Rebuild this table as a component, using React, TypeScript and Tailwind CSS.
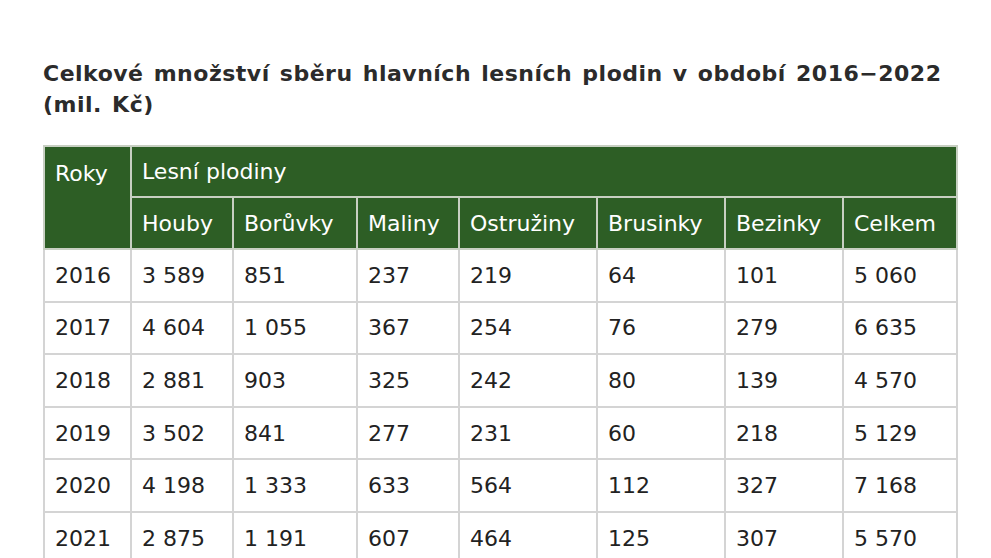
const rows: string[][] = [
  ['2016', '3 589', '851', '237', '219', '64', '101', '5 060'],
  ['2017', '4 604', '1 055', '367', '254', '76', '279', '6 635'],
  ['2018', '2 881', '903', '325', '242', '80', '139', '4 570'],
  ['2019', '3 502', '841', '277', '231', '60', '218', '5 129'],
  ['2020', '4 198', '1 333', '633', '564', '112', '327', '7 168'],
  ['2021', '2 875', '1 191', '607', '464', '125', '307', '5 570'],
  ['2022', '3 120', '1 010', '412', '301', '88', '240', '5 171'],
];

const widths = [87, 102, 124, 102, 138, 128, 118, 114];
const fruits = ['Houby', 'Borůvky', 'Maliny', 'Ostružiny', 'Brusinky', 'Bezinky', 'Celkem'];

export default function App() {
  return (
    <div className="min-h-screen bg-white pl-[43px] pt-[58px] font-['DejaVu_Sans',Verdana,sans-serif] text-[#222]">
      <h2 className="w-[912px] text-[22px] font-bold leading-[31px] tracking-[0.5px] [word-spacing:2px] text-[#2b2b2b]">
        Celkové množství sběru hlavních lesních plodin v období 2016−2022 (mil. Kč)
      </h2>
      <table className="mt-[25px] w-[914px] table-fixed border-collapse border-2 border-[#d4d4d4] text-[22px]">
        <colgroup>
          {widths.map((w, i) => (
            <col key={i} style={{ width: w }} />
          ))}
        </colgroup>
        <thead className="bg-[#2d5e25] text-white">
          <tr className="h-[51px]">
            <th rowSpan={2} className="border-2 border-[#c7cfc2] px-[10px] pt-[10px] text-left align-top font-normal">
              Roky
            </th>
            <th colSpan={7} className="border-2 border-[#c7cfc2] px-[10px] text-left font-normal">
              Lesní plodiny
            </th>
          </tr>
          <tr className="h-[52px]">
            {fruits.map((f) => (
              <th key={f} className="border-2 border-[#c7cfc2] px-[10px] text-left font-normal">
                {f}
              </th>
            ))}
          </tr>
        </thead>
        <tbody>
          {rows.map((r) => (
            <tr key={r[0]} className="h-[52.6px]">
              {r.map((c, i) => (
                <td key={i} className="border-2 border-[#d4d4d4] px-[10px] text-left">
                  {c}
                </td>
              ))}
            </tr>
          ))}
        </tbody>
      </table>
    </div>
  );
}
